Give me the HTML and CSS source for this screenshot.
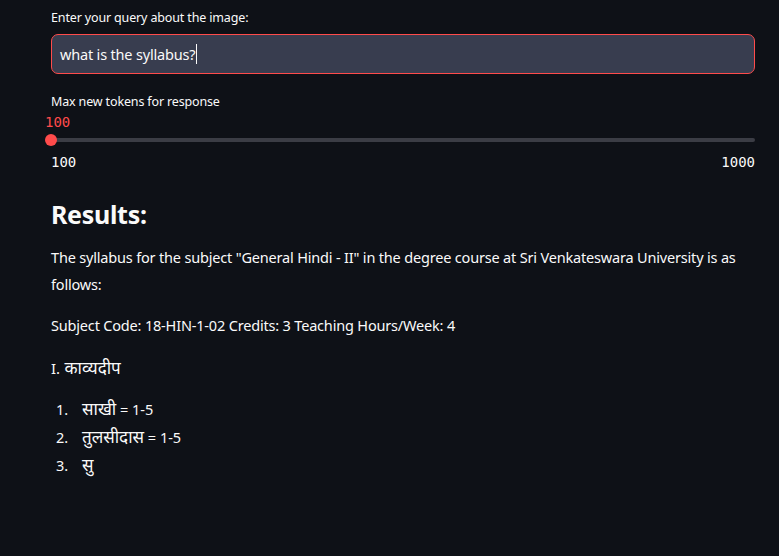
FILE: index.html
```html
<!DOCTYPE html>
<html lang="en">
<head>
<meta charset="utf-8">
<title>Query</title>
<link rel="stylesheet" href="styles.css">
</head>
<body>
<main class="main">
  <div class="field">
    <label class="label">Enter your query about the image:</label>
    <div class="input">what is the syllabus?<span class="caret"></span></div>
  </div>
  <div class="slider-field">
    <div class="label">Max new tokens for response</div>
    <div class="slider">
      <div class="value">100</div>
      <div class="track"><span class="thumb"></span></div>
      <div class="ticks"><span>100</span><span>1000</span></div>
    </div>
  </div>
  <h3 class="heading">Results:</h3>
  <div class="md">
    <p>The syllabus for the subject "General Hindi - II" in the degree course at Sri Venkateswara University is as follows:</p>
    <p>Subject Code: 18-HIN-1-02 Credits: 3 Teaching Hours/Week: 4</p>
    <p class="hi"><span class="latin">I.</span> काव्यदीप</p>
    <ol class="list">
      <li><span class="dev">साखी</span> = 1-5</li>
      <li><span class="dev">तुलसीदास</span> = 1-5</li>
      <li><span class="dev">सु</span></li>
    </ol>
  </div>
</main>
</body>
</html>
```
FILE: styles.css
```css
* { box-sizing: border-box; }
html, body {
  margin: 0;
  background: #0e1117;
  color: #fafafa;
  font-family: "Noto Sans", "Open Sans", sans-serif;
}
.main {
  width: 704px;
  margin-left: 51px;
  padding-top: 7px;
}
.label {
  display: block;
  font-size: 12.5px;
  letter-spacing: -0.15px;
  line-height: 22px;
  height: 22px;
  color: #fafafa;
}
.field .label { margin-bottom: 5px; }
.input {
  height: 40px;
  background: #383d4f;
  border: 1px solid #ff4b4b;
  border-radius: 7px;
  padding: 0 8px;
  display: flex;
  align-items: center;
  font-size: 14.5px;
  letter-spacing: -0.18px;
  color: #fafafa;
}
.caret {
  display: inline-block;
  width: 1px;
  height: 20px;
  background: #fafafa;
  margin-left: 1px;
}
.slider-field { margin-top: 17px; }
.slider { position: relative; }
.value {
  font-family: "DejaVu Sans Mono", monospace;
  font-size: 14px;
  line-height: 18px;
  color: #ff4b4b;
  margin-left: -6px;
}
.track {
  position: relative;
  height: 4px;
  margin-top: 7px;
  background: #3b3d45;
  border-radius: 2px;
}
.thumb {
  position: absolute;
  left: -6px;
  top: -4px;
  width: 12px;
  height: 12px;
  border-radius: 50%;
  background: #ff4b4b;
}
.ticks {
  display: flex;
  justify-content: space-between;
  font-family: "DejaVu Sans Mono", monospace;
  font-size: 14px;
  line-height: 18px;
  margin-top: 11px;
}
.heading {
  font-size: 25px;
  font-weight: 700;
  letter-spacing: -0.3px;
  margin: 25px 0 0;
  line-height: 36px;
}
.md { margin-top: 12px; font-size: 14.5px; letter-spacing: -0.18px; }
.md p { margin: 0 0 14px; line-height: 27px; }
.md .hi { font-size: 17px; line-height: 30px; height: 30px; margin-bottom: 12px; margin-top: 13px; letter-spacing: 0; }
.latin { font-family: "Noto Sans", sans-serif; font-size: 15px; }
.list {
  margin: 0;
  padding-left: 0;
  list-style: none;
  counter-reset: item;
  letter-spacing: 0;
}
.list li {
  counter-increment: item;
  line-height: 28px;
  height: 28px;
  display: flex;
  align-items: center;
  white-space: pre;
}
.list li::before {
  content: counter(item) ".";
  width: 26px;
  padding-left: 5px;
}
.dev { font-size: 17px; }
```
